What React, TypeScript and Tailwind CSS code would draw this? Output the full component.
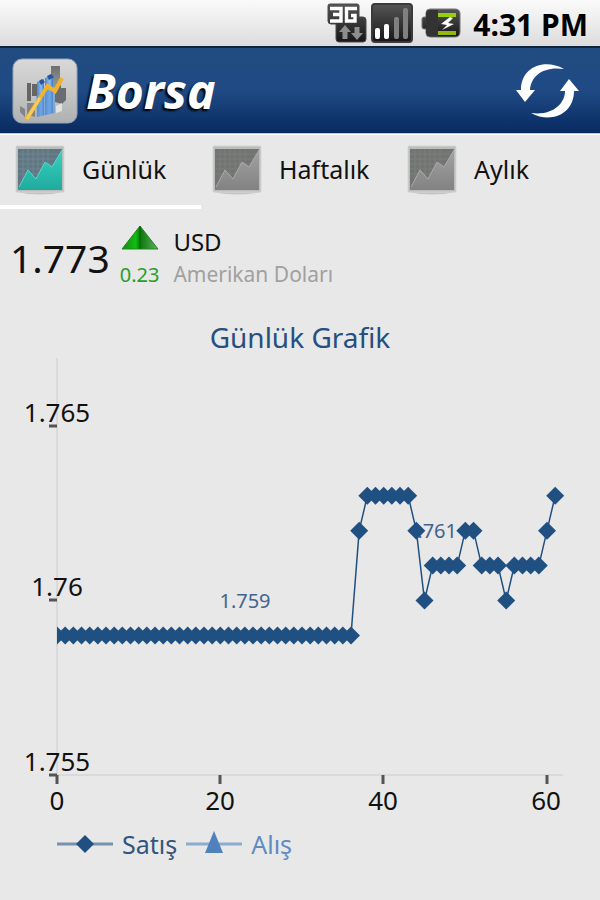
import { useState } from "react";

const FONT = "font-['Noto_Sans','Open_Sans',sans-serif]";

function ThreeGIcon() {
  return (
    <svg width="40" height="40" viewBox="0 0 40 40" role="img" aria-label="3G">
      <defs>
        <linearGradient id="dark" x1="0" y1="0" x2="0" y2="1">
          <stop offset="0" stopColor="#555" />
          <stop offset="1" stopColor="#161616" />
        </linearGradient>
      </defs>
      <path d="M3 1h27q2 0 2 2v11h4q3 0 3 3v19q0 3-3 3H12q-3 0-3-3V21H4q-3 0-3-3V3q0-2 2-2z" fill="url(#dark)" stroke="#4a4a4a" />
      <path d="M3 5.500h11v12.500H3M6 11.500h8" fill="none" stroke="#fff" strokeWidth="3.400" />
      <path d="M30 5.500H19.500v12.500H28v-5.500h-4" fill="none" stroke="#fff" strokeWidth="3.400" />
      <path d="M18 22l6 7h-3.500v7h-5v-7H12z" fill="#8e8e8e" />
      <path d="M30 37l-6-7h3.500v-6h5v6H36z" fill="#8e8e8e" />
    </svg>
  );
}

function SignalIcon() {
  return (
    <svg width="42" height="40" viewBox="0 0 42 40" role="img" aria-label="Signal">
      <rect x="1" y="1" width="40" height="38" rx="3" fill="url(#dark)" stroke="#3a3a3a" strokeWidth="2" />
      <rect x="4" y="25" width="5" height="11" rx="2" fill="#fff" />
      <rect x="13" y="21" width="5" height="15" rx="2" fill="#fff" />
      <rect x="23" y="14" width="5" height="22" rx="2" fill="#808080" />
      <rect x="32" y="5" width="5" height="31" rx="2" fill="#808080" />
    </svg>
  );
}

function BatteryIcon() {
  return (
    <svg width="40" height="30" viewBox="0 0 40 30" role="img" aria-label="Battery">
      <path d="M9 1h25q5 0 5 5v18q0 5-5 5H9q-4 0-4-4v-4H3q-2 0-2-2v-8q0-2 2-2h2V5q0-4 4-4z" fill="url(#dark)" stroke="#777" />
      <path d="M5 6q0-4 4-4h8v26H9q-4 0-4-4z" fill="#333" />
      <rect x="17" y="5" width="18" height="4" fill="#94d108" />
      <rect x="17" y="23" width="18" height="4" fill="#94b80c" />
      <path d="M29 9l-9 7 6 1-5 5 12-6-6-1 5-5z" fill="#fff" />
    </svg>
  );
}

function AppLogo() {
  return (
    <svg width="66" height="66" viewBox="0 0 66 66" aria-hidden="true">
      <defs>
        <linearGradient id="tile" x1="0" y1="0" x2="0" y2="1">
          <stop offset="0" stopColor="#d8d8d8" />
          <stop offset=".45" stopColor="#c9c9c9" />
          <stop offset="1" stopColor="#aeb0b1" />
        </linearGradient>
        <linearGradient id="bluebar" x1="0" y1="0" x2="1" y2="0">
          <stop offset="0" stopColor="#4b86cf" />
          <stop offset=".6" stopColor="#8ebdf0" />
          <stop offset="1" stopColor="#3d74be" />
        </linearGradient>
        <linearGradient id="gray" x1="0" y1="0" x2="0" y2="1">
          <stop offset="0" stopColor="#555" />
          <stop offset="1" stopColor="#999" />
        </linearGradient>
      </defs>
      <rect x="1" y="1" width="64" height="64" rx="9" fill="url(#tile)" stroke="#96a4b5" />
      <path d="M39 8h9v26h-9z" fill="url(#gray)" opacity=".8" />
      <path d="M15 25h4v18h-4zM20 26h7v12h-7z" fill="#555" opacity=".85" />
      <path d="M43 30l6-3v3h5v12l-4 4-7-2z" fill="#696c70" />
      <path d="M8 48l5 3v8l-5-5zM15 45h8v14l-8-3z" fill="#777" opacity=".8" />
      <path d="M44 48l6-3v8l-6 2z" fill="#e2e2e2" />
      <path d="M25 24l7-3v36l-7 2z" fill="url(#bluebar)" />
      <path d="M33 20l8-3v38l-8 2z" fill="url(#bluebar)" />
      <path d="M24 38l10-7 9 4v20l-18 4z" fill="#5d96db" opacity=".6" />
      <path d="M27 23l3-2 3 3-4 3zM35 18l4-2 3 3-5 3z" fill="#25569c" />
      <path d="M14 62L35.500 28l7.500 5 7-13" fill="none" stroke="#efb32d" strokeWidth="4" />
      <path d="M15 61L28 40" stroke="#f9ca56" strokeWidth="3" />
    </svg>
  );
}

function RefreshIcon() {
  return (
    <svg width="64" height="56" viewBox="0 0 64 56" aria-hidden="true">
      <path d="M48 6C28-5 5 4 5 27H0l9 12 10-12h-5C15 13 27 3 48 6z" fill="#fff" />
      <path d="M15 50c20 11 43 1 43-22h5L53 16l-9 12h5C49 41 36 53 15 50z" fill="#fff" />
    </svg>
  );
}

function ChartIcon({ active }: { active: boolean }) {
  const key = active ? "on" : "off";
  return (
    <svg width="52" height="52" viewBox="0 0 52 52" aria-hidden="true">
      <defs>
        <linearGradient id={`area-${key}`} x1="0" y1="0" x2="0" y2="1">
          <stop offset="0" stopColor={active ? "#35d3c1" : "#a3a3a3"} />
          <stop offset="1" stopColor={active ? "#20aa9d" : "#828282"} />
        </linearGradient>
      </defs>
      <path d="M2 2h48v46q-24 5-48 0z" fill="#c4c6c6" />
      <rect x="2" y="2" width="48" height="46" rx="1" fill="#bbbdbd" stroke="#d4d5d5" />
      <rect x="4" y="5" width="44" height="41" fill={active ? "#607783" : "#727472"} />
      <path
        d="M4 10h44M4 15h44M4 20h44M4 25h44M4 30h44M9 5v41M14 5v41M19 5v41M24 5v41M29 5v41M34 5v41"
        stroke={active ? "#70858f" : "#7c7e7c"}
      />
      <path d="M4 45L14 26l8 9 9-17 7 5L48 6v40H4z" fill={`url(#area-${key})`} />
      <path d="M5 43L14 26l8 9 9-17 7 5L48 6" fill="none" stroke={active ? "#59d9cb" : "#ababab"} />
    </svg>
  );
}

function UpIcon() {
  return (
    <svg width="38" height="25" viewBox="0 0 38 25" role="img" aria-label="Artış">
      <defs>
        <linearGradient id="up" x1="0" y1="0" x2="1" y2="0">
          <stop offset="0" stopColor="#118611" />
          <stop offset=".38" stopColor="#0fc00f" />
          <stop offset=".5" stopColor="#087808" />
          <stop offset="1" stopColor="#62ae5d" />
        </linearGradient>
      </defs>
      <path d="M19 1L1 24h36z" fill="url(#up)" stroke="#248524" strokeLinejoin="round" />
      <path d="M19 1v23" stroke="#0b5f0b" />
    </svg>
  );
}

// Thousandths above 1.755 for each sample, as [value, repeat] runs.
const RUNS: [number, number][] = [
  [4, 37], [7, 1], [8, 6], [7, 1], [5, 1], [6, 4], [7, 2], [6, 3], [5, 1], [6, 4], [7, 1], [8, 1],
];
const SAMPLES = RUNS.flatMap(([value, count]) => Array<number>(count).fill(value));
const ORIGIN_X = 57;
const ORIGIN_Y = 419;
const px = (i: number) => ORIGIN_X + (i * 490) / 60;
const py = (v: number) => ORIGIN_Y - v * 34.9;

function PriceChart() {
  const points = SAMPLES.map((v, i) => ({ x: px(i), y: py(v) }));
  return (
    <svg viewBox="0 0 600 462" className="block w-full" role="img" aria-label="Günlük Grafik">
      <defs>
        <clipPath id="plot">
          <rect x="57" y="0" width="520" height="430" />
        </clipPath>
      </defs>
      <path d="M57 2V419H563" fill="none" stroke="#dadada" strokeWidth="2" />
      <g stroke="#555" strokeWidth="3">
        <path d="M49 70h8M49 244h8M49 419h8" />
        <path d="M57 419v9M220 419v9M383 419v9M547 419v9" />
      </g>
      <g fontSize="26" fill="#111" textAnchor="middle">
        <text x="57" y="66">1.765</text>
        <text x="57" y="240">1.76</text>
        <text x="57" y="415">1.755</text>
        <text x="57" y="454">0</text>
        <text x="220" y="454">20</text>
        <text x="383" y="454">40</text>
        <text x="546" y="454">60</text>
      </g>
      <g fontSize="20" fill="#3f658f">
        <text x="245" y="252" textAnchor="middle">1.759</text>
        <text x="457" y="182" textAnchor="end">.761</text>
      </g>
      <g clipPath="url(#plot)">
        <polyline points={points.map((p) => `${p.x},${p.y}`).join(" ")} fill="none" stroke="#205081" strokeWidth="1.500" />
        {points.map((p, i) => (
          <path key={i} d={`M${p.x - 9} ${p.y}l9-9 9 9-9 9z`} fill="#205081" />
        ))}
      </g>
    </svg>
  );
}

const TABS = [
  { label: "Günlük", box: "w-[201px] pl-3.5" },
  { label: "Haftalık", box: "w-[195px] pl-2.5" },
  { label: "Aylık", box: "w-[195px] pl-2.5" },
];

export default function App() {
  const [tab, setTab] = useState(0);
  return (
    <div className={`flex min-h-screen flex-col bg-[#e8e8e8] text-[#111] ${FONT}`}>
      <div className="flex h-12 items-center justify-end border-b-2 border-[#10243c] bg-linear-to-b from-[#fafafa] via-[#ececec] to-[#dcdcdc] pr-3">
        <ThreeGIcon />
        <span className="ml-1 flex"><SignalIcon /></span>
        <span className="ml-2 flex"><BatteryIcon /></span>
        <time className="ml-3 pt-1 text-[30px] leading-none font-bold text-black">4:31 PM</time>
      </div>

      <header className="flex h-[86px] items-center border-b border-[#b9c8d8] bg-linear-to-b from-[#204c80] via-[#1f4a85] to-[#082a60] pr-5 pl-3">
        <AppLogo />
        <h1 className="ml-2 flex-1 text-[48px] leading-none font-bold text-white italic [text-shadow:-2px_2px_2px_#000]">Borsa</h1>
        <button type="button" aria-label="Yenile">
          <RefreshIcon />
        </button>
      </header>

      <nav className="flex h-[75px] border-t border-white">
        {TABS.map(({ label, box }, i) => (
          <button
            key={label}
            type="button"
            aria-pressed={tab === i}
            onClick={() => setTab(i)}
            className={`flex items-center gap-4 border-b-4 text-[25px] ${box} ${tab === i ? "border-white" : "border-transparent"}`}
          >
            <ChartIcon active={i === tab} />
            {label}
          </button>
        ))}
      </nav>

      <section className="flex items-center gap-2.5 pt-4 pl-2.5">
        <strong className="text-[39px] leading-[66px] font-normal">1.773</strong>
        <div className="flex flex-col items-center">
          <UpIcon />
          <span className="pt-2 text-[20px] leading-[33px] text-[#25a02a]">0.23</span>
        </div>
        <div className="ml-1 text-[24px] leading-[33px]">
          <div>USD</div>
          <div className="text-[21px] text-[#a0a0a0]">Amerikan Doları</div>
        </div>
      </section>

      <h2 className="pt-7 text-center text-[28px] leading-[37px] text-[#264f80]">Günlük Grafik</h2>
      <PriceChart />

      <div className="flex items-center pt-2 pl-14 text-[25px] leading-9">
        <svg width="58" height="28" viewBox="0 0 58 28" aria-hidden="true">
          <path d="M1 14h56" stroke="#7692ae" strokeWidth="3" />
          <path d="M20 14l9-9 9 9-9 9z" fill="#205081" />
        </svg>
        <span className="ml-2 text-[#31557f]">Satış</span>
        <svg className="ml-2" width="58" height="28" viewBox="0 0 58 28" aria-hidden="true">
          <path d="M1 14h56" stroke="#8cabd1" strokeWidth="3" />
          <path d="M29 1l9 22H20z" fill="#4f81bd" />
        </svg>
        <span className="ml-2 text-[#608bc2]">Alış</span>
      </div>
    </div>
  );
}
